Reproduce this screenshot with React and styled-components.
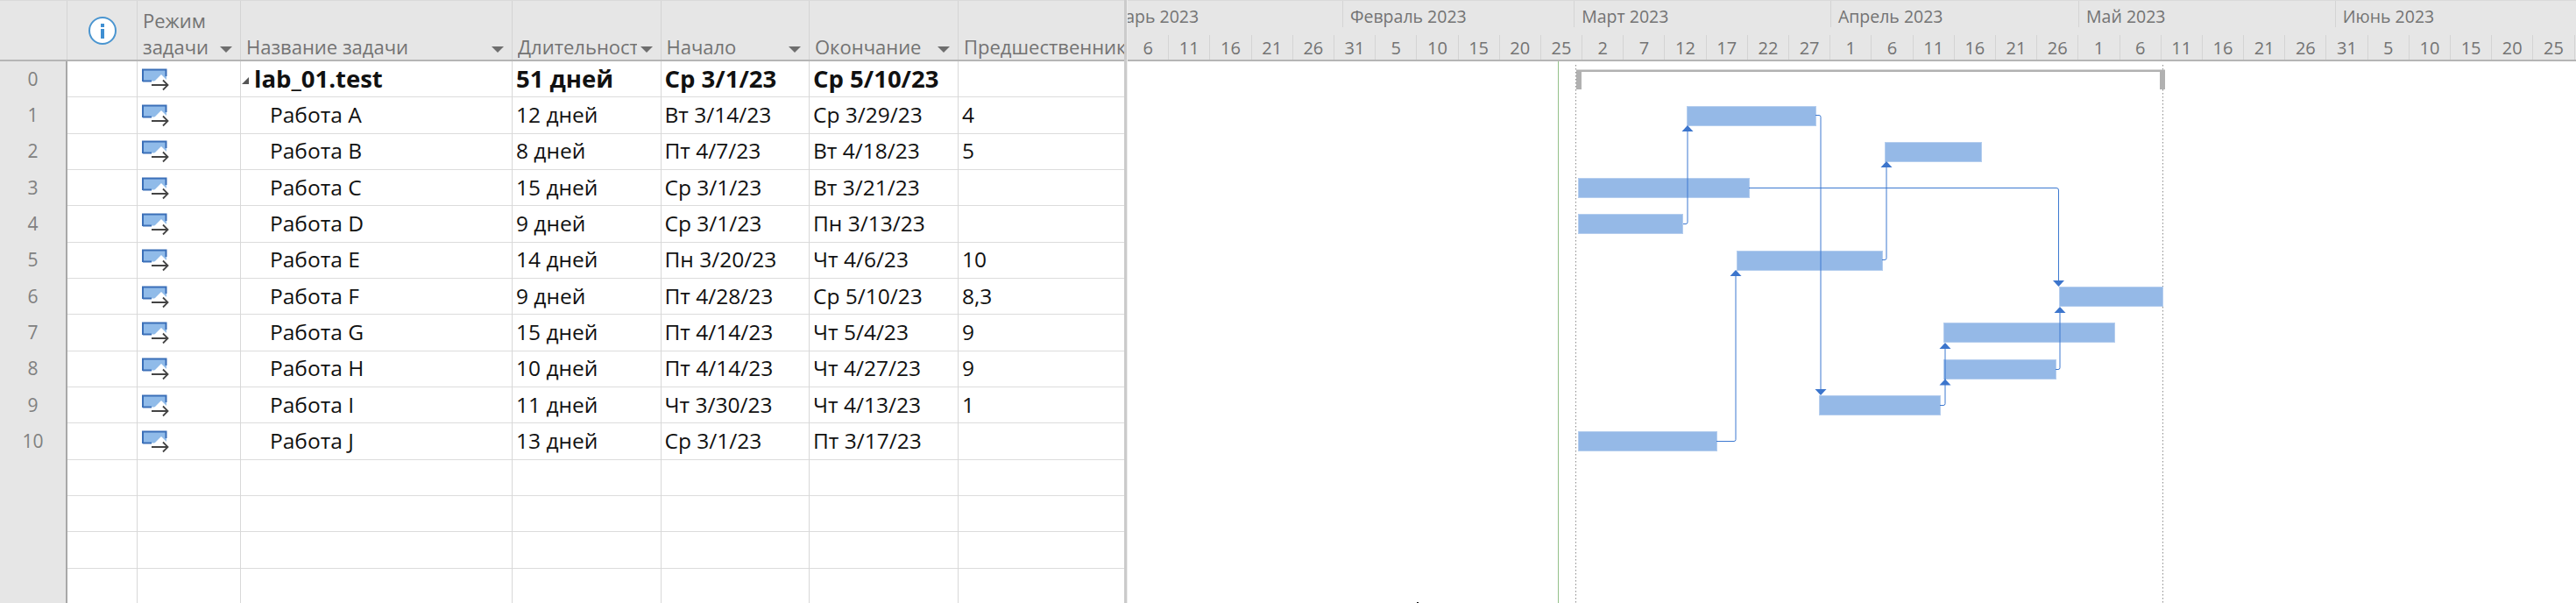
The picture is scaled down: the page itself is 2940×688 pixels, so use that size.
import React from "react";
import styled, { createGlobalStyle } from "styled-components";

const GlobalStyle = createGlobalStyle`
  html, body {
    margin: 0;
    padding: 0;
    background: #fff;
  }
  body {
    font-family: "Open Sans", "Noto Sans", "Liberation Sans", sans-serif;
  }
`;

const COLUMNS = "77px 80px 118px 310px 169.5px 169.5px 170px 189px";
const DAY_WIDTH = 9.44;

const tasks = [
  { id: 0, name: "lab_01.test", dur: "51 дней", start: "Ср 3/1/23", end: "Ср 5/10/23", pred: "", summary: true },
  { id: 1, name: "Работа A", dur: "12 дней", start: "Вт 3/14/23", end: "Ср 3/29/23", pred: "4" },
  { id: 2, name: "Работа B", dur: "8 дней", start: "Пт 4/7/23", end: "Вт 4/18/23", pred: "5" },
  { id: 3, name: "Работа C", dur: "15 дней", start: "Ср 3/1/23", end: "Вт 3/21/23", pred: "" },
  { id: 4, name: "Работа D", dur: "9 дней", start: "Ср 3/1/23", end: "Пн 3/13/23", pred: "" },
  { id: 5, name: "Работа E", dur: "14 дней", start: "Пн 3/20/23", end: "Чт 4/6/23", pred: "10" },
  { id: 6, name: "Работа F", dur: "9 дней", start: "Пт 4/28/23", end: "Ср 5/10/23", pred: "8,3" },
  { id: 7, name: "Работа G", dur: "15 дней", start: "Пт 4/14/23", end: "Чт 5/4/23", pred: "9" },
  { id: 8, name: "Работа H", dur: "10 дней", start: "Пт 4/14/23", end: "Чт 4/27/23", pred: "9" },
  { id: 9, name: "Работа I", dur: "11 дней", start: "Чт 3/30/23", end: "Чт 4/13/23", pred: "1" },
  { id: 10, name: "Работа J", dur: "13 дней", start: "Ср 3/1/23", end: "Пт 3/17/23", pred: "" },
];

const months = [
  { label: "Январь 2023", days: 31 },
  { label: "Февраль 2023", days: 28 },
  { label: "Март 2023", days: 31 },
  { label: "Апрель 2023", days: 30 },
  { label: "Май 2023", days: 31 },
  { label: "Июнь 2023", days: 30 },
];

const ticks = [6, 11, 16, 21, 26, 31, 5, 10, 15, 20, 25, 2, 7, 12, 17, 22, 27, 1, 6, 11, 16, 21, 26, 1, 6, 11, 16, 21, 26, 31, 5, 10, 15, 20, 25];

// chart coords: x is page x minus 1287, y is page y minus 70
const bars = [
  [638, 51, 147],
  [864, 92, 110],
  [514, 133, 195],
  [514, 174, 119],
  [695, 216, 166],
  [1063, 257, 118],
  [931, 298, 195],
  [931, 340, 128],
  [789, 381, 138],
  [514, 422, 158],
];

const links = [
  { d: "M634 185.5 H637 Q639 185.5 639 183.5 V78", tip: [639, 73, "up"] },
  { d: "M785 61.5 H789 Q791 61.5 791 63.5 V375", tip: [791, 381, "down"] },
  { d: "M861 226.5 H864 Q866 226.5 866 224.5 V120", tip: [866, 114, "up"] },
  { d: "M709 144.5 H1060 Q1062.5 144.5 1062.5 147 V251", tip: [1062.5, 257, "down"] },
  { d: "M672 433.5 H692 Q694 433.5 694 431.5 V244", tip: [694, 238, "up"] },
  { d: "M927 392.5 H931 Q933 392.5 933 390.5 V327", tip: [933, 321, "up"] },
  { d: "M933 363 V362", tip: [933, 362.5, "up"] },
  { d: "M1059 351.5 H1062 Q1064 351.5 1064 349.5 V286", tip: [1064, 280, "up"] },
];

const Page = styled.div`
  display: flex;
  width: 2940px;
  height: 688px;
  overflow: hidden;
  background: #fff;
`;

const TablePane = styled.div`
  width: 1283px;
  flex-shrink: 0;
  overflow: hidden;
`;

const HeaderRow = styled.div`
  display: grid;
  grid-template-columns: ${COLUMNS};
  height: 70px;
  box-sizing: border-box;
  background: #e6e6e6;
  border-top: 1px solid #dadada;
  border-bottom: 2px solid #b5b5b5;
`;

const HeaderCell = styled.div`
  display: flex;
  align-items: flex-end;
  justify-content: space-between;
  box-sizing: border-box;
  min-width: 0;
  padding: 0 9px 0 6px;
  border-right: 1px solid #d4d4d4;
  overflow: hidden;
  &:last-child {
    padding-right: 0;
    border-right: none;
  }
`;

const HeaderText = styled.div`
  flex: 1;
  min-width: 0;
  overflow: hidden;
  white-space: nowrap;
  color: #737373;
  font-size: 22px;
  line-height: 30px;
`;

const InfoCell = styled(HeaderCell)`
  align-items: center;
  justify-content: center;
  padding: 0;
`;

const SortArrow = styled.span`
  flex-shrink: 0;
  width: 0;
  height: 0;
  margin: 0 0 8px 4px;
  border-left: 7px solid transparent;
  border-right: 7px solid transparent;
  border-top: 7px solid #6e6e6e;
`;

const Row = styled.div`
  display: grid;
  grid-template-columns: ${COLUMNS};
  height: 41.35px;
  box-sizing: border-box;
  border-bottom: 1px solid #dcdcdc;
`;

const RowHead = styled.div`
  display: flex;
  align-items: center;
  justify-content: center;
  box-sizing: border-box;
  padding-bottom: 2px;
  margin-bottom: -1px;
  background: #e6e6e6;
  border-right: 2px solid #a8a8a8;
  color: #808080;
  font-size: 21px;
`;

const Cell = styled.div`
  display: flex;
  align-items: center;
  box-sizing: border-box;
  min-width: 0;
  padding-left: ${(p) => p.$indent || 4}px;
  padding-bottom: 3px;
  border-right: 1px solid #d8d8d8;
  margin-bottom: -1px;
  overflow: hidden;
  white-space: nowrap;
  color: #111;
  font-size: ${(p) => (p.$bold ? 27.5 : 24.5)}px;
  font-weight: ${(p) => (p.$bold ? 700 : 400)};
  &:last-child {
    border-right: none;
  }
`;

const IconCell = styled(Cell)`
  padding-bottom: 0;
`;

const Collapse = styled.span`
  flex-shrink: 0;
  width: 0;
  height: 0;
  margin: 5px 6px 0 -2px;
  border-left: 8px solid transparent;
  border-bottom: 8px solid #555;
`;

const Splitter = styled.div`
  width: 4px;
  flex-shrink: 0;
  background: #cbcbcb;
  border-right: 1px solid #ececec;
  box-sizing: border-box;
`;

const ChartPane = styled.div`
  flex: 1;
  min-width: 0;
  overflow: hidden;
`;

const Timescale = styled.div`
  height: 70px;
  box-sizing: border-box;
  background: #e6e6e6;
  border-top: 1px solid #dadada;
  border-bottom: 2px solid #b5b5b5;
  overflow: hidden;
`;

const MonthRow = styled.div`
  display: flex;
  height: 30px;
  margin-left: -46.7px;
`;

const Month = styled.div`
  flex-shrink: 0;
  box-sizing: border-box;
  padding: 0 0 0 8px;
  border-right: 1px solid #d4d4d4;
  color: #737373;
  font-size: 19.5px;
  line-height: 36px;
  white-space: nowrap;
  overflow: hidden;
`;

const TickRow = styled.div`
  display: flex;
  height: 30px;
  margin-top: 9px;
`;

const Tick = styled.div`
  flex-shrink: 0;
  box-sizing: border-box;
  width: 47.2px;
  border-right: 1px solid #d4d4d4;
  color: #737373;
  font-size: 20px;
  line-height: 30px;
  text-align: center;
`;

const Chart = styled.svg`
  display: block;
`;

const TaskModeIcon = () => (
  <svg width="31" height="26" viewBox="0 0 31 26">
    <rect x="1" y="1" width="27" height="13.5" fill="#90bbe9" />
    <path d="M1 15V1.5H27.5V9" fill="none" stroke="#3a6fb8" strokeWidth="2" />
    <path d="M1 14.5H11" stroke="#3a6fb8" strokeWidth="2" />
    <path d="M14 15L22 7L30 15Z" fill="#fff" />
    <path d="M11 19H29.5M24 13.5L29.5 19L24 24.5" fill="none" stroke="#444" strokeWidth="1.8" />
  </svg>
);

const InfoIcon = () => (
  <svg width="34" height="34" viewBox="0 0 34 34">
    <circle cx="17" cy="17" r="15" fill="#fff" stroke="#4a95d0" strokeWidth="2" />
    <rect x="15" y="9" width="4" height="4" fill="#3f8fd2" />
    <rect x="15" y="15" width="4" height="11" fill="#3f8fd2" />
  </svg>
);

const Arrowhead = ({ x, y, dir }) => {
  const h = dir === "up" ? 7 : -7;
  return <path d={`M${x} ${y}L${x + 6.5} ${y + h}H${x - 6.5}Z`} fill="#3c75cc" />;
};

const GanttChart = () => (
  <Chart width="1653" height="618" viewBox="0 0 1653 618">
    <line x1="491.5" y1="0" x2="491.5" y2="618" stroke="#93c08a" />
    <line x1="511.5" y1="4" x2="511.5" y2="618" stroke="#8c8c8c" strokeDasharray="1.5 2.5" />
    <line x1="1181.5" y1="4" x2="1181.5" y2="618" stroke="#8c8c8c" strokeDasharray="1.5 2.5" />
    <path d="M512 32V9.5H1184V32H1178V12H518V32Z" fill="#b1b1b1" />
    {bars.map(([x, y, w], i) => (
      <rect key={i} x={x + 0.5} y={y + 0.5} width={w} height={22} fill="#95b9e7" stroke="#b4cdee" />
    ))}
    {links.map((l, i) => (
      <g key={i}>
        <path d={l.d} fill="none" stroke="#3c78d0" />
        <Arrowhead x={l.tip[0]} y={l.tip[1]} dir={l.tip[2]} />
      </g>
    ))}
    <rect x="330" y="617" width="2" height="1" fill="#111" />
  </Chart>
);

const App = () => (
  <Page>
    <GlobalStyle />
    <TablePane>
      <HeaderRow>
        <HeaderCell />
        <InfoCell>
          <InfoIcon />
        </InfoCell>
        <HeaderCell>
          <HeaderText>
            Режим
            <br />
            задачи
          </HeaderText>
          <SortArrow />
        </HeaderCell>
        {["Название задачи", "Длительность", "Начало", "Окончание"].map((title) => (
          <HeaderCell key={title}>
            <HeaderText>{title}</HeaderText>
            <SortArrow />
          </HeaderCell>
        ))}
        <HeaderCell>
          <HeaderText>Предшественники</HeaderText>
        </HeaderCell>
      </HeaderRow>
      {tasks.map((t) => (
        <Row key={t.id}>
          <RowHead>{t.id}</RowHead>
          <Cell />
          <IconCell $indent={5}>
            <TaskModeIcon />
          </IconCell>
          {t.summary ? (
            <Cell $indent={3} $bold>
              <Collapse />
              {t.name}
            </Cell>
          ) : (
            <Cell $indent={33}>{t.name}</Cell>
          )}
          <Cell $bold={t.summary}>{t.dur}</Cell>
          <Cell $bold={t.summary}>{t.start}</Cell>
          <Cell $bold={t.summary}>{t.end}</Cell>
          <Cell>{t.pred}</Cell>
        </Row>
      ))}
      {[0, 1, 2, 3].map((n) => (
        <Row key={n}>
          <RowHead />
          {[0, 1, 2, 3, 4, 5, 6].map((c) => (
            <Cell key={c} />
          ))}
        </Row>
      ))}
    </TablePane>
    <Splitter />
    <ChartPane>
      <Timescale>
        <MonthRow>
          {months.map((m) => (
            <Month key={m.label} style={{ width: m.days * DAY_WIDTH }}>
              {m.label}
            </Month>
          ))}
        </MonthRow>
        <TickRow>
          {ticks.map((d, i) => (
            <Tick key={i}>{d}</Tick>
          ))}
        </TickRow>
      </Timescale>
      <GanttChart />
    </ChartPane>
  </Page>
);

export default App;
